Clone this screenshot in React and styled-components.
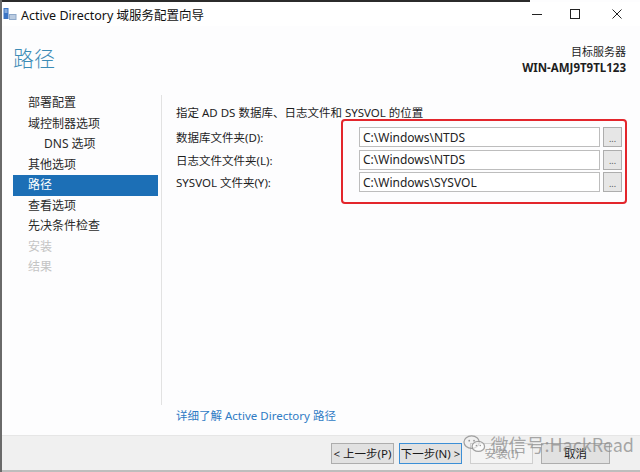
import React from "react";
import styled, { createGlobalStyle } from "styled-components";

const Global = createGlobalStyle`
  html, body {
    margin: 0;
    padding: 0;
    background: #ffffff;
  }
  body {
    font-family: "Noto Sans", "Noto Sans CJK SC", sans-serif;
    font-size: 12px;
    color: #1e1e1e;
  }
`;

const Window = styled.div`
  position: relative;
  width: 640px;
  height: 472px;
  box-sizing: border-box;
  border-left: 2px solid #6a6a6a;
  background: #fdfdfe;
  display: flex;
  flex-direction: column;
  overflow: hidden;
`;

const TopStrip = styled.div`
  height: 2px;
  width: 528px;
  background: #2b2b2b;
`;

const TitleBar = styled.div`
  height: 24px;
  display: flex;
  align-items: center;
  background: #ffffff;
`;

const AppIcon = styled.div`
  width: 14px;
  height: 14px;
  margin-left: 1px;
  display: flex;
`;

const Title = styled.div`
  margin-left: 4px;
  font-size: 12.5px;
  color: #111;
  flex: 1;
`;

const Controls = styled.div`
  display: flex;
  align-items: center;
  height: 100%;
`;

const Ctrl = styled.div`
  width: ${(p) => p.$w}px;
  display: flex;
  justify-content: center;
  align-items: center;
`;

const Header = styled.div`
  height: 62px;
  display: flex;
  justify-content: space-between;
  align-items: flex-start;
  padding: 0 14px 0 11px;
`;

const PageTitle = styled.div`
  font-size: 21px;
  color: #3d8cb6;
  margin-top: 16px;
  font-family: "Noto Sans CJK SC", sans-serif;
  font-weight: 300;
`;

const Target = styled.div`
  margin-top: 18px;
  text-align: right;
  line-height: 16px;
  font-size: 11px;
`;

const Bold = styled.div`
  font-weight: 700;
  font-size: 11.5px;
`;

const Main = styled.div`
  flex: 1;
  display: flex;
  min-height: 0;
`;

const Sidebar = styled.div`
  width: 145px;
  padding: 5px 0 0 11px;
  display: flex;
  flex-direction: column;
`;

const NavItem = styled.div`
  height: 20.5px;
  line-height: 20.5px;
  padding-left: ${(p) => (p.$sub ? 31 : 15)}px;
  background: ${(p) => (p.$active ? "#1c6fb6" : "transparent")};
  color: ${(p) => (p.$active ? "#ffffff" : p.$disabled ? "#c4c4c4" : "#2a2a2a")};
  font-size: 12px;
`;

const Divider = styled.div`
  width: 1px;
  margin: 7px 0 30px 3px;
  background: #e2e2e2;
`;

const Content = styled.div`
  position: relative;
  flex: 1;
  padding: 17px 0 0 14px;
  display: flex;
  flex-direction: column;
`;

const Desc = styled.div`
  line-height: 16px;
  font-size: 11.5px;
  margin-bottom: 6px;
`;

const Form = styled.div`
  display: grid;
  grid-template-columns: 180px 241px 19px;
  column-gap: 3px;
  row-gap: 2.5px;
  align-items: center;
`;

const Label = styled.div`
  font-size: 11.5px;
  margin-right: -3px;
`;

const Field = styled.div`
  height: 18px;
  border: 1px solid #bdbdbd;
  background: #fff;
  display: flex;
  align-items: center;
  padding-left: 3px;
  font-size: 12px;
  color: #222;
`;

const Browse = styled.div`
  box-sizing: border-box;
  height: 20px;
  border: 1px solid #adadad;
  background: #e6e6e6;
  display: flex;
  justify-content: center;
  align-items: center;
  font-size: 9px;
  color: #555;
  padding-top: 2px;
`;

const Highlight = styled.div`
  position: absolute;
  left: 179px;
  top: 31px;
  width: 282px;
  height: 81px;
  border: 2px solid #e3262c;
  border-radius: 4px;
  pointer-events: none;
`;

const Spacer = styled.div`
  flex: 1;
`;

const Link = styled.div`
  color: #2f7bc4;
  font-size: 11.5px;
  margin-bottom: 12px;
`;

const Footer = styled.div`
  height: 34px;
  background: #f0f0f0;
  border-top: 1px solid #e6e6e6;
  border-bottom: 2px solid #bdbdbd;
  display: flex;
  justify-content: flex-end;
  align-items: center;
  padding-right: 30px;
  gap: 5px;
`;

const Button = styled.div`
  width: ${(p) => p.$w || 62}px;
  height: 21px;
  box-sizing: border-box;
  border: 1px solid ${(p) => (p.$primary ? "#3c8fd6" : p.$disabled ? "#cfcfcf" : "#adadad")};
  background: ${(p) => (p.$disabled ? "#f4f4f4" : "#e1e1e1")};
  color: ${(p) => (p.$disabled ? "#a0a0a0" : "#1a1a1a")};
  display: flex;
  justify-content: center;
  align-items: center;
  font-size: 11.5px;
  margin-left: ${(p) => p.$ml || 0}px;
`;

const Watermark = styled.div`
  position: absolute;
  right: 6px;
  bottom: 15px;
  display: flex;
  align-items: center;
  gap: 4px;
  color: rgba(140, 140, 140, 0.75);
  font-size: 18px;
  font-family: "Noto Sans CJK SC", sans-serif;
  pointer-events: none;
`;

const nav = [
  { t: "部署配置" },
  { t: "域控制器选项" },
  { t: "DNS 选项", sub: true },
  { t: "其他选项" },
  { t: "路径", active: true },
  { t: "查看选项" },
  { t: "先决条件检查" },
  { t: "安装", disabled: true },
  { t: "结果", disabled: true },
];

const rows = [
  ["数据库文件夹(D):", "C:\\Windows\\NTDS"],
  ["日志文件文件夹(L):", "C:\\Windows\\NTDS"],
  ["SYSVOL 文件夹(Y):", "C:\\Windows\\SYSVOL"],
];

const App = () => {
  return (
    <>
      <Global />
      <Window>
        <TopStrip />
        <TitleBar>
          <AppIcon>
            <svg width="14" height="14" viewBox="0 0 14 14">
              <rect x="0.5" y="1" width="5" height="11" fill="#3b74c4" />
              <rect x="1.5" y="2.5" width="3" height="1" fill="#cfe1f7" />
              <rect x="1.5" y="4.5" width="3" height="1" fill="#cfe1f7" />
              <rect x="6" y="7" width="7.5" height="6" fill="#8fa9c9" />
              <rect x="7" y="8.5" width="5.5" height="1" fill="#e6eef8" />
              <rect x="7" y="10.5" width="5.5" height="1" fill="#e6eef8" />
            </svg>
          </AppIcon>
          <Title>Active Directory 域服务配置向导</Title>
          <Controls>
            <Ctrl $w={38}>
              <svg width="12" height="10" viewBox="0 0 12 10">
                <line x1="1" y1="5.5" x2="11" y2="5.5" stroke="#222" strokeWidth="1" />
              </svg>
            </Ctrl>
            <Ctrl $w={38}>
              <svg width="12" height="12" viewBox="0 0 12 12">
                <rect x="1.5" y="1.5" width="9" height="9" fill="none" stroke="#222" strokeWidth="1" />
              </svg>
            </Ctrl>
            <Ctrl $w={46}>
              <svg width="12" height="12" viewBox="0 0 12 12">
                <path d="M1.5 1.5 L10.5 10.5 M10.5 1.5 L1.5 10.5" stroke="#222" strokeWidth="1" />
              </svg>
            </Ctrl>
          </Controls>
        </TitleBar>
        <Header>
          <PageTitle>路径</PageTitle>
          <Target>
            <div>目标服务器</div>
            <Bold>WIN-AMJ9T9TL123</Bold>
          </Target>
        </Header>
        <Main>
          <Sidebar>
            {nav.map((n) => (
              <NavItem key={n.t} $sub={n.sub} $active={n.active} $disabled={n.disabled}>
                {n.t}
              </NavItem>
            ))}
          </Sidebar>
          <Divider />
          <Content>
            <Desc>指定 AD DS 数据库、日志文件和 SYSVOL 的位置</Desc>
            <Form>
              {rows.map(([label, value]) => (
                <React.Fragment key={label}>
                  <Label>{label}</Label>
                  <Field>{value}</Field>
                  <Browse>...</Browse>
                </React.Fragment>
              ))}
            </Form>
            <Highlight />
            <Spacer />
            <Link>详细了解 Active Directory 路径</Link>
          </Content>
        </Main>
        <Footer>
          <Button $w={63}>&lt; 上一步(P)</Button>
          <Button $w={63} $primary>下一步(N) &gt;</Button>
          <Button $w={63} $disabled $ml={3}>安装(I)</Button>
          <Button $w={69} $ml={3}>取消</Button>
        </Footer>
        <Watermark>
          <svg width="23" height="20" viewBox="0 0 24 20">
            <ellipse cx="9" cy="8" rx="8" ry="6.5" fill="none" stroke="rgba(140,140,140,0.8)" strokeWidth="1.3" />
            <ellipse cx="16" cy="12.5" rx="6.5" ry="5.2" fill="rgba(255,255,255,0.6)" stroke="rgba(140,140,140,0.8)" strokeWidth="1.3" />
            <circle cx="6.5" cy="6.5" r="0.9" fill="rgba(140,140,140,0.9)" />
            <circle cx="11.5" cy="6.5" r="0.9" fill="rgba(140,140,140,0.9)" />
            <circle cx="14" cy="11.5" r="0.8" fill="rgba(140,140,140,0.9)" />
            <circle cx="18" cy="11.5" r="0.8" fill="rgba(140,140,140,0.9)" />
          </svg>
          <span>微信号:HackRead</span>
        </Watermark>
      </Window>
    </>
  );
};

export default App;
